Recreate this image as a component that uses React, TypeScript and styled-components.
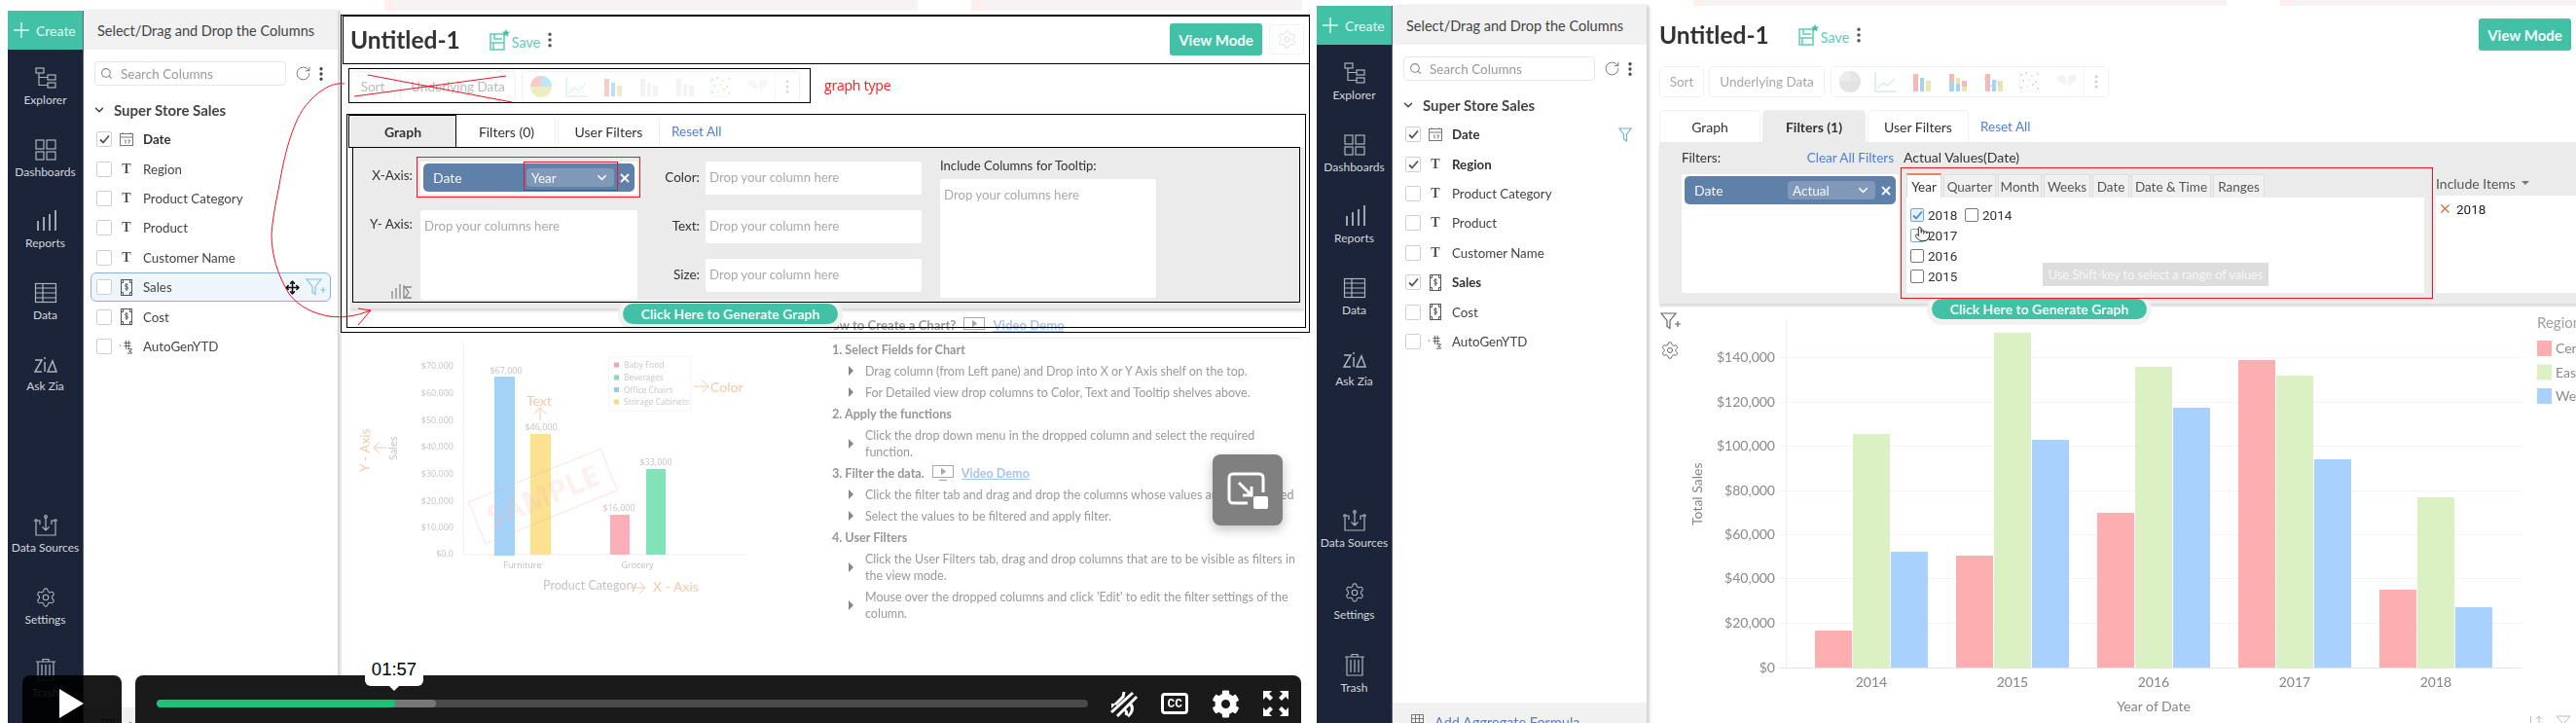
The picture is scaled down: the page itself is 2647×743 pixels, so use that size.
import React from 'react';
import styled, { createGlobalStyle } from 'styled-components';
import { Move, Settings, Pointer, ChevronDown, X, Search, RotateCw, EllipsisVertical } from 'lucide-react';
import { FaCog } from 'react-icons/fa';

const GlobalStyle = createGlobalStyle`
  html, body {
    margin: 0;
    background: #ffffff;
    font-family: Lato, "Open Sans", sans-serif;
  }
`;

const TEAL = '#43c1a6';
const LINK = '#4f7fd6';

/* ---------- small drawings ---------- */

const navStroke = { fill: 'none', stroke: '#aeb4bf', strokeWidth: 1.2 };

const ExplorerIcon = () => (
  <svg width="24" height="22" viewBox="0 0 24 22" {...navStroke}>
    <rect x="2" y="1" width="8" height="5" />
    <rect x="14" y="8" width="8" height="5" />
    <rect x="14" y="16" width="8" height="5" />
    <path d="M5 6v12.500h9M5 10.500h9" />
  </svg>
);
const DashboardIcon = () => (
  <svg width="24" height="22" viewBox="0 0 24 22" {...navStroke}>
    <rect x="2" y="1" width="8" height="9" />
    <rect x="13" y="1" width="9" height="9" />
    <rect x="2" y="13" width="8" height="8" />
    <rect x="13" y="13" width="9" height="8" />
  </svg>
);
const ReportIcon = () => (
  <svg width="24" height="22" viewBox="0 0 24 22" {...navStroke} strokeWidth="1.8">
    <path d="M4 21v-10M10 21v-14M16 21v-17M22 21v-21" />
  </svg>
);
const DataIcon = () => (
  <svg width="24" height="22" viewBox="0 0 24 22" {...navStroke}>
    <rect x="1.500" y="1.500" width="21" height="19" />
    <path d="M1.500 6h21M1.500 11h21M1.500 16h21M9 1.500v19" />
  </svg>
);
const ZiaIcon = () => (
  <svg width="24" height="22" viewBox="0 0 24 22" {...navStroke} strokeWidth="1.5">
    <path d="M1 7h7l-7 12h7M11 9v10M11 4v2M14 19l5-11 4 11z" />
  </svg>
);
const SourceIcon = () => (
  <svg width="24" height="22" viewBox="0 0 24 22" {...navStroke}>
    <path d="M2 8v13h20v-13M12 3v13M8.500 12.500l3.500 3.500 3.500-3.500M3 6h3v4M21 6h-3v4" />
    <circle cx="12" cy="2" r="1.300" />
    <circle cx="2" cy="6" r="1.200" />
    <circle cx="22" cy="6" r="1.200" />
  </svg>
);
const TrashIcon = () => (
  <svg width="24" height="24" viewBox="0 0 24 24" {...navStroke}>
    <path d="M2 4h20M9 4v-2.500h6v2.500M4 4v19h16v-19M8 7v13M12 7v13M16 7v13" />
  </svg>
);
const CollapseIcon = () => (
  <svg width="24" height="22" viewBox="0 0 24 22" {...navStroke}>
    <path d="M8 3h14M2 9h20M8 5l-5 4 5 4" />
  </svg>
);

const CalendarIcon = () => (
  <svg width="16" height="16" viewBox="0 0 16 16" fill="none" stroke="#777" strokeWidth="1">
    <rect x="1.500" y="2.500" width="13" height="12" />
    <path d="M1.500 6h13M4 1v2M12 1v2M6 9h1v3.500M9.500 9h2l-1.500 3.500" />
  </svg>
);
const MoneyIcon = () => (
  <svg width="16" height="19" viewBox="0 0 16 19" fill="none" stroke="#555" strokeWidth="1">
    <rect x="2.500" y="1.500" width="11" height="16" />
    <path d="M2.500 4.500h2v-3M11.500 1.500v3h2M2.500 14.500h2v3M11.500 17.500v-3h2" />
    <path d="M9.500 7c-1-1-3-1-3 .5s3 1 3 2.500-2 1.500-3 .5M8 5v8" />
  </svg>
);
const FormulaIcon = () => (
  <svg width="18" height="18" viewBox="0 0 18 18" fill="none" stroke="#555" strokeWidth="1">
    <path d="M6 5h8M6 8.500h8M8.500 2v10M11.500 2v10M1 8h1.500" />
    <path d="M10 12h5v1l-3 1.500 3 1.500v1h-5" />
  </svg>
);
const FilterPlusIcon = ({ color = '#8ec3de' }: { color?: string }) => (
  <svg width="22" height="18" viewBox="0 0 22 18" fill="none" stroke={color} strokeWidth="1.200">
    <path d="M1 1h15l-6 7.500v8l-3-2v-6zM15 12h6M18 9v6" />
  </svg>
);
const FilterIcon = () => (
  <svg width="14" height="15" viewBox="0 0 14 15" fill="none" stroke="#6fb2dc" strokeWidth="1.200">
    <path d="M1 1h12l-4.500 6v7l-3-2v-5z" />
  </svg>
);
const CheckMark = ({ color = '#555' }: { color?: string }) => (
  <svg width="11" height="10" viewBox="0 0 11 10" fill="none" stroke={color} strokeWidth="1.800">
    <path d="M1 5.500l3 3 6-7" />
  </svg>
);
const SaveIcon = () => (
  <svg width="22" height="22" viewBox="0 0 22 22" fill="none" stroke="#5ecdb5" strokeWidth="1.500">
    <path d="M1 5h14v16h-14zM5 5v5h8M1 14h14M4 14v7" />
    <path d="M17 0l1.200 2.500 2.800.3-2 1.900.5 2.800-2.500-1.400-2.500 1.400.5-2.800-2-1.900 2.800-.3z" fill="#43c1a6" stroke="none" />
  </svg>
);
const ShelfIcon = () => (
  <svg width="22" height="17" viewBox="0 0 22 17" fill="none" stroke="#888" strokeWidth="1.300">
    <path d="M1 16v-8M5 16v-11M9 16v-15M13 16v-14M21 4h-7l4 5.500-4 5.500h7" />
  </svg>
);

const ChartThumb = ({ kind, colors }: { kind: string; colors: string[] }) => {
  const [a, b, c] = colors;
  return (
    <svg width="24" height="24" viewBox="0 0 24 24" fill="none">
      {kind === 'pie' && (
        <>
          <circle cx="12" cy="12" r="11" fill={c} />
          <path d="M12 12L12 1A11 11 0 0 1 23 12z" fill={b} />
          <path d="M12 12L1 12A11 11 0 0 1 12 1z" fill={a} />
        </>
      )}
      {kind === 'line' && <path d="M1 2v20h22M3 19l6-6 4 3 8-7" stroke={b} strokeWidth="1" />}
      {kind === 'bar' && (
        <>
          <rect x="3" y="4" width="5" height="18" fill={a} />
          <rect x="10" y="8" width="4" height="14" fill={b} />
          <rect x="16" y="11" width="5" height="11" fill={c} />
        </>
      )}
      {kind === 'stack' && (
        <>
          <rect x="3" y="4" width="5" height="9" fill={a} />
          <rect x="3" y="13" width="5" height="9" fill={b} />
          <rect x="10" y="8" width="4" height="6" fill={c} />
          <rect x="10" y="14" width="4" height="8" fill={b} />
          <rect x="16" y="11" width="5" height="6" fill={a} />
          <rect x="16" y="17" width="5" height="5" fill={c} />
        </>
      )}
      {kind === 'combo' && (
        <>
          <rect x="3" y="4" width="5" height="18" fill={a} />
          <rect x="10" y="10" width="4" height="12" fill={b} />
          <rect x="16" y="11" width="5" height="11" fill={c} />
          <path d="M2 8l7 9 5-6 7 7" stroke={b} strokeWidth="1" />
        </>
      )}
      {kind === 'scatter' &&
        [[3, 5], [8, 3], [14, 6], [20, 4], [5, 11], [11, 10], [18, 12], [3, 18], [9, 17], [15, 15], [20, 19]].map(([x, y], i) => (
          <circle key={i} cx={x} cy={y} r="0.9" fill={colors[i % 3]} />
        ))}
      {kind === 'scatter' && <path d="M1 1v21h22" stroke="#eeeeee" strokeWidth="1" />}
      {kind === 'map' && <path d="M1 8l6-3 4 2 2 6-3 2-5-3zM14 6l8-2 1 6-5 3-2 5-2-4z" fill="#f1f1f1" />}
    </svg>
  );
};

/* ---------- shell ---------- */

const Page = styled.div`
  position: relative;
  width: 2647px;
  height: 743px;
  overflow: hidden;
  display: flex;
  background: #ffffff;
`;

const Shot = styled.div<{ $width: number; $pad: number }>`
  flex: 0 0 ${(p) => p.$width}px;
  height: 743px;
  overflow: hidden;
  box-sizing: border-box;
  padding-left: ${(p) => p.$pad}px;
  display: flex;
  filter: blur(0.55px);
`;

const Rail = styled.nav<{ $top: number }>`
  flex: 0 0 78px;
  margin-top: ${(p) => p.$top}px;
  background: #1b2438;
  border-right: 1px solid #59627a;
  box-sizing: border-box;
  display: flex;
  flex-direction: column;
`;

const CreateBtn = styled.div`
  height: 40px;
  flex: none;
  background: ${TEAL};
  display: flex;
  align-items: center;
  padding-left: 5px;
  gap: 6px;
  color: #e4f6f2;
  font-size: 14px;
`;

const RailItem = styled.div<{ $gap?: number }>`
  height: 73.5px;
  flex: none;
  box-sizing: border-box;
  padding-top: 18px;
  margin-top: ${(p) => p.$gap ?? 0}px;
  display: flex;
  flex-direction: column;
  align-items: center;
  gap: 4px;
  color: #d3d6dc;
  font-size: 12px;
  line-height: 16px;
  white-space: nowrap;
`;

const ColumnPane = styled.aside<{ $top: number }>`
  flex: 0 0 261px;
  height: 760px;
  margin-top: ${(p) => p.$top}px;
  background: #ffffff;
  box-shadow: 3px 0 3px #d4d4d4;
  position: relative;
  z-index: 1;
  display: flex;
  flex-direction: column;
`;

const PaneHead = styled.div`
  height: 40px;
  flex: none;
  background: #f1f1f1;
  display: flex;
  align-items: center;
  padding-left: 14px;
  font-size: 14.5px;
  color: #444;
`;

const SearchRow = styled.div`
  margin: 12px 0 0 11px;
  display: flex;
  align-items: center;
`;

const SearchBox = styled.div`
  width: 197px;
  height: 25px;
  box-sizing: border-box;
  border: 1px solid #e6e6e6;
  border-radius: 4px;
  display: flex;
  align-items: center;
  padding-left: 5px;
  gap: 8px;
  color: #9a9a9a;
  font-size: 13.5px;
`;

const SearchTools = styled.div`
  display: flex;
  align-items: center;
  margin-left: 9px;
  gap: 1px;
  color: #666;
`;

const TreeHead = styled.div`
  margin: 15px 0 5px 9px;
  height: 20px;
  display: flex;
  align-items: center;
  gap: 8px;
  font-size: 15px;
  font-weight: 700;
  color: #444;
`;

const ColumnRow = styled.div<{ $hover?: boolean }>`
  height: 30.4px;
  margin: 0 7px;
  box-sizing: border-box;
  padding-left: 5px;
  display: flex;
  align-items: center;
  border: 1px solid ${(p) => (p.$hover ? '#84b6d2' : 'transparent')};
  border-radius: 6px;
  background: ${(p) => (p.$hover ? '#eef6fb' : 'transparent')};
`;

const CheckBox = styled.span`
  width: 16px;
  height: 16px;
  flex: none;
  box-sizing: border-box;
  border: 1px solid #cfcfcf;
  border-radius: 2px;
  background: #ffffff;
  display: flex;
  align-items: center;
  justify-content: center;
`;

const TypeCell = styled.span`
  width: 16px;
  margin: 0 9px 0 7px;
  flex: none;
  display: flex;
  align-items: center;
  justify-content: center;
  font: 700 14px "Liberation Serif", serif;
  color: #555;
`;

const ColumnName = styled.span<{ $on?: boolean }>`
  font-size: 13.3px;
  font-weight: ${(p) => (p.$on ? 700 : 400)};
  color: ${(p) => (p.$on ? '#333' : '#444')};
`;

const RowTools = styled.span<{ $pad: number }>`
  margin-left: auto;
  padding-right: ${(p) => p.$pad}px;
  display: flex;
  align-items: center;
  gap: 6px;
`;

const PaneFoot = styled.div`
  margin-top: auto;
  height: 44px;
  flex: none;
  background: #f1f1f1;
  box-sizing: border-box;
  padding: 12px 0 0 19px;
  display: flex;
  gap: 8px;
  color: ${LINK};
  font-size: 14.5px;
`;

const Main = styled.main`
  flex: 1;
  min-width: 0;
  display: flex;
  flex-direction: column;
`;

const TopStrip = styled.div<{ $h: number }>`
  flex: none;
  height: ${(p) => p.$h}px;
  background: linear-gradient(
    90deg,
    #ffffff 48px,
    #fcefee 48px,
    #fcefee 58px,
    #f5f3f3 58px,
    #f5f3f3 596px,
    #ffffff 596px,
    #ffffff 651px,
    #fcefee 651px,
    #fcefee 663px,
    #f5f3f3 663px,
    #f5f3f3 991px,
    #ffffff 991px
  );
`;

const Canvas = styled.div`
  width: 980px;
  flex: none;
  margin-left: 13px;
`;

const TitleRow = styled.div`
  height: 33px;
  margin-top: 13px;
  display: flex;
  align-items: center;
`;

const Title = styled.h1`
  margin: 0;
  font-size: 24.5px;
  font-weight: 700;
  color: #333;
  line-height: 33px;
`;

const SaveLink = styled.div`
  margin-left: 30px;
  display: flex;
  align-items: flex-end;
  gap: 1px;
  color: #5ecdb5;
  font-size: 14.5px;
`;

const HeadDots = styled.span`
  margin-left: -1px;
  display: flex;
  color: #555;
`;

const ViewMode = styled.div`
  margin-left: auto;
  width: 95px;
  height: 33px;
  background: ${TEAL};
  border-radius: 3px;
  color: #f2fbf9;
  font-size: 15px;
  font-weight: 700;
  display: flex;
  align-items: center;
  justify-content: center;
`;

const GearBox = styled.div`
  margin-left: 7px;
  width: 36px;
  height: 31px;
  box-sizing: border-box;
  border: 1px solid #f2f2f2;
  border-radius: 3px;
  display: flex;
  align-items: center;
  justify-content: center;
  color: #d8d8d8;
`;

const ToolRow = styled.div`
  margin-top: 16px;
  height: 32px;
  display: flex;
  gap: 5px;
`;

const ToolBtn = styled.div<{ $width: number; $faded?: boolean }>`
  width: ${(p) => p.$width}px;
  box-sizing: border-box;
  border: 1px solid #f1f1f1;
  border-radius: 4px;
  color: ${(p) => (p.$faded ? '#b9b9b9' : '#a8a8a8')};
  font-size: 13.5px;
  display: flex;
  align-items: center;
  justify-content: center;
`;

const ChartGroup = styled.div<{ $fade: number }>`
  margin-left: 1px;
  width: 286px;
  box-sizing: border-box;
  border: 1px solid #f1f1f1;
  border-radius: 4px;
  display: flex;
  > span {
    opacity: ${(p) => p.$fade};
  }
`;

const ChartCell = styled.span`
  width: 37px;
  flex: none;
  display: flex;
  align-items: center;
  justify-content: center;
`;

const ChartMore = styled.span`
  flex: 1;
  border-left: 1px solid #f1f1f1;
  display: flex;
  align-items: center;
  justify-content: center;
  color: #c4c4c4;
`;

const TabRow = styled.div`
  margin-top: 13px;
  height: 33px;
  display: flex;
  align-items: stretch;
  gap: 2px;
`;

const Tab = styled.div<{ $width: number; $on?: boolean }>`
  width: ${(p) => p.$width}px;
  box-sizing: border-box;
  border: 1px solid ${(p) => (p.$on ? '#ebebeb' : '#f0f0f0')};
  border-bottom: none;
  border-radius: 5px 5px 0 0;
  background: ${(p) => (p.$on ? '#ebebeb' : '#ffffff')};
  color: #333;
  font-size: 14px;
  font-weight: ${(p) => (p.$on ? 700 : 400)};
  display: flex;
  align-items: center;
  justify-content: center;
`;

const ResetLink = styled.div`
  margin-left: 10px;
  align-self: center;
  color: ${LINK};
  font-size: 13.5px;
`;

const FormPanel = styled.section`
  height: 166px;
  background: #ebebeb;
  box-shadow: 0 3px 2px #dddddd;
  display: flex;
`;

const AxisColumn = styled.div`
  width: 295px;
  flex: none;
  padding-top: 15px;
  display: flex;
  flex-direction: column;
  gap: 16px;
`;

const AxisRow = styled.div`
  display: flex;
  gap: 8px;
`;

const AxisLabel = styled.div<{ $height: number }>`
  width: 64px;
  height: ${(p) => p.$height}px;
  flex: none;
  box-sizing: border-box;
  padding-top: 6px;
  text-align: right;
  font-size: 13.5px;
  color: #333;
  display: flex;
  flex-direction: column;
  justify-content: space-between;
  align-items: flex-end;
  white-space: nowrap;
`;

const DropBox = styled.div<{ $height: number; $width?: number }>`
  width: ${(p) => p.$width ?? 223}px;
  height: ${(p) => p.$height}px;
  box-sizing: border-box;
  background: #ffffff;
  border-radius: 2px;
  padding: 2px 3px;
  color: #a9a9a9;
  font-size: 13.2px;
  line-height: 28px;
  white-space: nowrap;
`;

const PlaceHolder = styled.span`
  padding-left: 1px;
`;

const ShelfColumn = styled.div`
  margin-left: 23px;
  width: 269px;
  flex: none;
  padding-top: 15px;
  display: flex;
  flex-direction: column;
  gap: 16px;
`;

const ShelfRow = styled.div`
  display: flex;
  gap: 6px;
`;

const ShelfLabel = styled.div`
  width: 41px;
  flex: none;
  line-height: 32px;
  text-align: right;
  font-size: 13.5px;
  color: #333;
`;

const TipColumn = styled.div`
  margin-left: 19px;
  padding-top: 12px;
`;

const TipLabel = styled.div`
  font-size: 13.1px;
  line-height: 14px;
  margin-bottom: 7px;
  color: #333;
`;

const Pill = styled.div`
  height: 29px;
  border-radius: 5px;
  background: #5f80a9;
  color: #f6f8fb;
  display: flex;
  align-items: center;
  padding-left: 10px;
  font-size: 14px;
`;

const PillSelect = styled.div`
  margin-left: auto;
  width: 90px;
  height: 19px;
  box-sizing: border-box;
  padding: 0 5px;
  border-radius: 4px;
  background: #8199b9;
  display: flex;
  align-items: center;
  justify-content: space-between;
  font-size: 13.5px;
`;

const PillClose = styled.span`
  width: 21px;
  display: flex;
  align-items: center;
  justify-content: center;
`;

/* filters tab */

const FilterColumn = styled.div`
  width: 223px;
  flex: none;
  margin-left: 23px;
  padding-top: 8px;
`;

const FilterHead = styled.div`
  height: 16px;
  margin-bottom: 9px;
  display: flex;
  justify-content: space-between;
  padding-right: 5px;
  align-items: center;
  font-size: 13.5px;
  color: #333;
`;

const ClearLink = styled.span`
  color: ${LINK};
  font-size: 13.5px;
`;

const ValueColumn = styled.div`
  width: 535px;
  flex: none;
  margin-left: 5px;
  padding-top: 8px;
`;

const ValueHead = styled.div`
  height: 16px;
  line-height: 16px;
  font-size: 14px;
  color: #333;
  white-space: nowrap;
`;

const DateTabs = styled.div`
  margin: 8px 0 0 3px;
  height: 25px;
  display: flex;
  gap: 2px;
`;

const DateTab = styled.div<{ $width: number; $on?: boolean }>`
  width: ${(p) => p.$width}px;
  box-sizing: border-box;
  border: 1px solid #dedede;
  border-top: ${(p) => (p.$on ? '2px solid #e8835a' : '1px solid #dedede')};
  border-bottom: none;
  margin-top: ${(p) => (p.$on ? 0 : 1)}px;
  background: ${(p) => (p.$on ? '#ffffff' : '#f0f0f0')};
  color: ${(p) => (p.$on ? '#333' : '#555')};
  font-size: 13.5px;
  display: flex;
  align-items: center;
  justify-content: center;
  white-space: nowrap;
`;

const DatePanel = styled.div`
  position: relative;
  margin-left: 3px;
  height: 98px;
  width: 532px;
  box-sizing: border-box;
  padding: 7px 0 0 4px;
  background: #ffffff;
  display: grid;
  grid-template-rows: repeat(4, 21px);
  grid-auto-flow: column;
  grid-auto-columns: 56px;
`;

const YearItem = styled.label`
  position: relative;
  display: flex;
  align-items: center;
  gap: 4px;
  font: 13.5px Roboto, sans-serif;
  color: #333;
`;

const YearBox = styled.span<{ $on?: boolean; $hot?: boolean }>`
  width: 14px;
  height: 14px;
  box-sizing: border-box;
  border: 1px solid ${(p) => (p.$on || p.$hot ? '#6fa8dc' : '#777')};
  border-radius: 2px;
  background: ${(p) => (p.$on ? '#e6f1fb' : '#fff')};
  display: flex;
  align-items: center;
  justify-content: center;
`;

const HandCursor = styled.span`
  position: absolute;
  left: 4px;
  top: 1px;
  display: flex;
  color: #222;
`;

const ShiftHint = styled.div`
  position: absolute;
  left: 140px;
  top: 67px;
  width: 232px;
  height: 24px;
  background: #dddddd;
  color: #f6f6f6;
  font-size: 12.7px;
  line-height: 24px;
  text-align: center;
  white-space: nowrap;
`;

const IncludeColumn = styled.div`
  margin-left: 12px;
  padding-top: 34px;
  flex: 1;
`;

const IncludeHead = styled.div`
  height: 16px;
  margin-bottom: 5px;
  display: flex;
  align-items: center;
  gap: 6px;
  font-size: 14px;
  color: #555;
`;

const Caret = styled.span`
  width: 0;
  height: 0;
  border: 4px solid transparent;
  border-top: 4px solid #777;
  margin-top: 4px;
`;

const IncludeList = styled.div`
  height: 100px;
  background: #ffffff;
  box-sizing: border-box;
  padding: 6px 0 0 2px;
  display: flex;
  gap: 4px;
  align-items: flex-start;
  font: 13.5px Roboto, sans-serif;
  color: #222;
`;

/* generate button and lower part */

const ActionRow = styled.div<{ $bottom: number }>`
  position: relative;
  z-index: 2;
  margin: -5px 0 ${(p) => p.$bottom}px 280px;
  display: flex;
  align-items: flex-start;
`;

const Generate = styled.div`
  position: relative;
  z-index: 2;
  width: 221px;
  height: 21px;
  flex: none;
  border-radius: 11px;
  background: ${TEAL};
  box-shadow: 0 1px 0 5px #f1f1f1;
  color: #f5fcfa;
  font-size: 14px;
  font-weight: 700;
  line-height: 21px;
  text-align: center;
`;

const HowTo = styled.div`
  margin: 14px 0 0 -16px;
  height: 16px;
  display: flex;
  align-items: center;
  gap: 8px;
  color: #9b9b9b;
  font-size: 13.2px;
  font-weight: 700;
  white-space: nowrap;
`;

const DemoLink = styled.span`
  color: #a9c4ec;
  text-decoration: underline;
  font-weight: 700;
`;

const ScreenIcon = () => (
  <svg width="22" height="16" viewBox="0 0 22 16" fill="none" stroke="#a8a8a8" strokeWidth="1">
    <rect x="0.500" y="0.500" width="21" height="12" />
    <path d="M7 15.500h8" strokeWidth="1.500" />
    <path d="M9.500 3.500l4 3-4 3z" fill="#a8a8a8" />
  </svg>
);

const Lower = styled.div`
  display: flex;
  width: 980px;
`;

const HelpColumn = styled.div`
  width: 485px;
  flex: none;
  border-top: 1px solid #eeeeee;
  box-sizing: border-box;
  color: #9a9a9a;
`;

const HelpHead = styled.div`
  display: flex;
  align-items: center;
  gap: 8px;
  height: 22px;
  padding-left: 2px;
  font-size: 12.6px;
  font-weight: 700;
  color: #969696;
  white-space: nowrap;
`;

const HelpItem = styled.div`
  display: flex;
  align-items: center;
  padding: 2.5px 0 2.5px 19px;
  font-size: 12.5px;
  line-height: 17px;
  white-space: nowrap;
`;

const HelpArrow = styled.span`
  width: 0;
  height: 0;
  flex: none;
  margin-right: 12px;
  border: 5px solid transparent;
  border-left: 5px solid #888;
  border-right: none;
`;

const ChartRow = styled.div`
  display: flex;
  width: 980px;
`;

const ChartTools = styled.div`
  width: 30px;
  flex: none;
  padding: 5px 0 0 1px;
  box-sizing: border-box;
  display: flex;
  flex-direction: column;
  gap: 11px;
  color: #666;
`;

const ChartSvg = styled.svg`
  flex: none;
`;

/* video player on top of the first screenshot */

const PlayBtn = styled.div`
  position: absolute;
  left: 23px;
  top: 694px;
  width: 102px;
  height: 60px;
  border-radius: 8px;
  background: rgba(0, 0, 0, 0.9);
  z-index: 5;
`;

const PlayTriangle = styled.span`
  position: absolute;
  left: 38px;
  top: 14px;
  width: 0;
  height: 0;
  border-style: solid;
  border-width: 15px 0 15px 25px;
  border-color: transparent transparent transparent #ffffff;
`;

const VideoBar = styled.div`
  position: absolute;
  left: 139px;
  top: 694px;
  width: 1198px;
  height: 60px;
  border-radius: 8px;
  background: #1a1a1a;
  z-index: 5;
  box-sizing: border-box;
  padding: 6px 12px 0 22px;
  display: flex;
  align-items: flex-start;
`;

const Track = styled.div`
  position: relative;
  flex: none;
  margin-top: 19px;
  width: 957px;
  height: 8px;
  border-radius: 4px;
  background: #4a4a4a;
  overflow: hidden;
`;

const TrackFill = styled.div<{ $color: string; $width: number }>`
  position: absolute;
  left: 0;
  top: 0;
  bottom: 0;
  width: ${(p) => p.$width}px;
  border-radius: 4px;
  background: ${(p) => p.$color};
`;

const VideoTools = styled.div`
  display: flex;
  flex: 1;
  justify-content: space-between;
  align-items: center;
  margin-left: 22px;
  height: 46px;
  color: #ffffff;
`;

const CcBadge = styled.span`
  width: 28px;
  height: 22px;
  box-sizing: border-box;
  border: 3px solid #ffffff;
  border-radius: 4px;
  font: 700 13px "Liberation Mono", monospace;
  display: flex;
  align-items: center;
  justify-content: center;
`;

const TimeTip = styled.div`
  position: absolute;
  left: 375px;
  top: 672px;
  width: 60px;
  height: 33px;
  border-radius: 0 0 6px 6px;
  background: #ffffff;
  z-index: 6;
  font: 18.5px "Liberation Sans", sans-serif;
  color: #000000;
  text-align: center;
  line-height: 31px;
  &::after {
    content: '';
    position: absolute;
    left: 25px;
    bottom: -5px;
    border: 5px solid transparent;
    border-top: 5px solid #ffffff;
    border-bottom: none;
  }
`;

const PipOverlay = styled.div`
  position: absolute;
  left: 1246px;
  top: 467px;
  width: 72px;
  height: 73px;
  border-radius: 8px;
  background: #808080;
  box-shadow: 0 4px 12px rgba(0, 0, 0, 0.25);
  z-index: 5;
  display: flex;
  align-items: center;
  justify-content: center;
`;

const Marks = styled.svg`
  position: absolute;
  left: 0;
  top: 0;
  z-index: 4;
  pointer-events: none;
`;

const GraphTypeNote = styled.span`
  position: absolute;
  left: 847px;
  top: 78px;
  z-index: 4;
  color: #ff1a1a;
  font: 14px "Open Sans", sans-serif;
  letter-spacing: -0.2px;
`;

/* ---------- pieces with data ---------- */

const topNav = [
  { label: 'Explorer', icon: <ExplorerIcon /> },
  { label: 'Dashboards', icon: <DashboardIcon /> },
  { label: 'Reports', icon: <ReportIcon /> },
  { label: 'Data', icon: <DataIcon /> },
  { label: 'Ask Zia', icon: <ZiaIcon /> },
];

const NavRail = ({ top }: { top: number }) => (
  <Rail $top={top}>
    <CreateBtn>
      <svg width="18" height="18" viewBox="0 0 18 18" stroke="#e4f6f2" strokeWidth="1.400">
        <path d="M9 1v16M1 9h16" />
      </svg>
      Create
    </CreateBtn>
    {topNav.map((n) => (
      <RailItem key={n.label}>
        {n.icon}
        {n.label}
      </RailItem>
    ))}
    <RailItem $gap={92.5}>
      <SourceIcon />
      Data Sources
    </RailItem>
    <RailItem>
      <Settings size={22} strokeWidth={1.2} color="#aeb4bf" />
      Settings
    </RailItem>
    <RailItem>
      <TrashIcon />
      Trash
    </RailItem>
    <RailItem>
      <CollapseIcon />
    </RailItem>
  </Rail>
);

type Col = { name: string; type: 'date' | 'text' | 'num' | 'calc' };

const columns: Col[] = [
  { name: 'Date', type: 'date' },
  { name: 'Region', type: 'text' },
  { name: 'Product Category', type: 'text' },
  { name: 'Product', type: 'text' },
  { name: 'Customer Name', type: 'text' },
  { name: 'Sales', type: 'num' },
  { name: 'Cost', type: 'num' },
  { name: 'AutoGenYTD', type: 'calc' },
];

const TypeIcon = ({ type }: { type: Col['type'] }) => {
  if (type === 'date') return <CalendarIcon />;
  if (type === 'num') return <MoneyIcon />;
  if (type === 'calc') return <FormulaIcon />;
  return <>T</>;
};

const Columns = ({ top, checked, hover, filtered }: { top: number; checked: string[]; hover?: string; filtered?: string }) => (
  <ColumnPane $top={top}>
    <PaneHead>Select/Drag and Drop the Columns</PaneHead>
    <SearchRow>
      <SearchBox>
        <Search size={13} color="#888" />
        Search Columns
      </SearchBox>
      <SearchTools>
        <RotateCw size={17} strokeWidth={1.2} />
        <EllipsisVertical size={18} strokeWidth={2.4} color="#444" />
      </SearchTools>
    </SearchRow>
    <TreeHead>
      <ChevronDown size={14} strokeWidth={2.6} color="#444" />
      Super Store Sales
    </TreeHead>
    {columns.map((c) => (
      <ColumnRow key={c.name} $hover={c.name === hover}>
        <CheckBox>{checked.includes(c.name) && <CheckMark />}</CheckBox>
        <TypeCell>
          <TypeIcon type={c.type} />
        </TypeCell>
        <ColumnName $on={checked.includes(c.name)}>{c.name}</ColumnName>
        {c.name === hover && (
          <RowTools $pad={3}>
            <Move size={15} strokeWidth={2.6} color="#111" />
            <FilterPlusIcon />
          </RowTools>
        )}
        {c.name === filtered && (
          <RowTools $pad={7}>
            <FilterIcon />
          </RowTools>
        )}
      </ColumnRow>
    ))}
    <PaneFoot>
      <svg width="16" height="14" viewBox="0 0 16 14" fill="none" stroke="#777">
        <path d="M.5.500h12v12h-12zM.5 4.500h12M.5 8.500h12M4.500.500v12M8.500.500v12" />
      </svg>
      Add Aggregate Formula
    </PaneFoot>
  </ColumnPane>
);

const Header = () => (
  <TitleRow>
    <Title>Untitled-1</Title>
    <SaveLink>
      <SaveIcon />
      Save
    </SaveLink>
    <HeadDots>
      <EllipsisVertical size={20} strokeWidth={2.2} />
    </HeadDots>
    <ViewMode>View Mode</ViewMode>
    <GearBox>
      <Settings size={21} strokeWidth={1} />
    </GearBox>
  </TitleRow>
);

const Toolbar = ({ live }: { live?: boolean }) => {
  const gray = ['#ececec', '#ececec', '#ececec'];
  const full = ['#f5a8a6', '#8fc9ef', '#e3e29a'];
  const line = ['#fff', '#a9dcd6', '#fff'];
  return (
    <ToolRow>
      <ToolBtn $width={46} $faded={!live}>
        Sort
      </ToolBtn>
      <ToolBtn $width={119} $faded={!live}>
        Underlying Data
      </ToolBtn>
      <ChartGroup $fade={live ? 0.8 : 0.6}>
        <ChartCell>
          <ChartThumb kind="pie" colors={live ? ['#e6e6e6', '#e0e0e0', '#dcdcdc'] : ['#f3a9a0', '#8fd7ee', '#e3e29a']} />
        </ChartCell>
        <ChartCell>
          <ChartThumb kind="line" colors={line} />
        </ChartCell>
        <ChartCell>
          <ChartThumb kind="bar" colors={full} />
        </ChartCell>
        <ChartCell>
          <ChartThumb kind="stack" colors={live ? full : gray} />
        </ChartCell>
        <ChartCell>
          <ChartThumb kind="combo" colors={live ? full : gray} />
        </ChartCell>
        <ChartCell>
          <ChartThumb kind="scatter" colors={full} />
        </ChartCell>
        <ChartCell>
          <ChartThumb kind="map" colors={gray} />
        </ChartCell>
        <ChartMore>
          <EllipsisVertical size={18} strokeWidth={2} />
        </ChartMore>
      </ChartGroup>
    </ToolRow>
  );
};

const FieldPill = ({ name, agg }: { name: string; agg: string }) => (
  <Pill>
    {name}
    <PillSelect>
      {agg}
      <ChevronDown size={15} strokeWidth={2.4} />
    </PillSelect>
    <PillClose>
      <X size={14} strokeWidth={3.2} />
    </PillClose>
  </Pill>
);

const GraphForm = () => (
  <FormPanel>
    <AxisColumn>
      <AxisRow>
        <AxisLabel $height={34}>X-Axis:</AxisLabel>
        <DropBox $height={34}>
          <FieldPill name="Date" agg="Year" />
        </DropBox>
      </AxisRow>
      <AxisRow>
        <AxisLabel $height={92}>
          Y- Axis:
          <ShelfIcon />
        </AxisLabel>
        <DropBox $height={92}>
          <PlaceHolder>Drop your columns here</PlaceHolder>
        </DropBox>
      </AxisRow>
    </AxisColumn>
    <ShelfColumn>
      {['Color:', 'Text:', 'Size:'].map((s) => (
        <ShelfRow key={s}>
          <ShelfLabel>{s}</ShelfLabel>
          <DropBox $height={34} $width={222}>
            <PlaceHolder>Drop your column here</PlaceHolder>
          </DropBox>
        </ShelfRow>
      ))}
    </ShelfColumn>
    <TipColumn>
      <TipLabel>Include Columns for Tooltip:</TipLabel>
      <DropBox $height={122} $width={222}>
        <PlaceHolder>Drop your columns here</PlaceHolder>
      </DropBox>
    </TipColumn>
  </FormPanel>
);

const dateTabs = [
  { label: 'Year', w: 36, on: true },
  { label: 'Quarter', w: 54 },
  { label: 'Month', w: 45 },
  { label: 'Weeks', w: 48 },
  { label: 'Date', w: 38 },
  { label: 'Date & Time', w: 82 },
  { label: 'Ranges', w: 53 },
];

const FiltersForm = () => (
  <FormPanel>
    <FilterColumn>
      <FilterHead>
        Filters:
        <ClearLink>Clear All Filters</ClearLink>
      </FilterHead>
      <DropBox $height={122}>
        <FieldPill name="Date" agg="Actual" />
      </DropBox>
    </FilterColumn>
    <ValueColumn>
      <ValueHead>Actual Values(Date)</ValueHead>
      <DateTabs>
        {dateTabs.map((t) => (
          <DateTab key={t.label} $width={t.w} $on={t.on}>
            {t.label}
          </DateTab>
        ))}
      </DateTabs>
      <DatePanel>
        {['2018', '2017', '2016', '2015', '2014'].map((y) => (
          <YearItem key={y}>
            <YearBox $on={y === '2018'} $hot={y === '2017'}>
              {y === '2018' && <CheckMark color="#3f8edc" />}
            </YearBox>
            {y}
            {y === '2017' && (
              <HandCursor>
                <Pointer size={17} strokeWidth={1.4} fill="#ffffff" />
              </HandCursor>
            )}
          </YearItem>
        ))}
        <ShiftHint>Use Shift-key to select a range of values</ShiftHint>
      </DatePanel>
    </ValueColumn>
    <IncludeColumn>
      <IncludeHead>
        Include Items
        <Caret />
      </IncludeHead>
      <IncludeList>
        <X size={15} strokeWidth={1.8} color="#d9623b" />
        2018
      </IncludeList>
    </IncludeColumn>
  </FormPanel>
);

/* the faded sample chart: drawn in page coordinates, shifted to the origin of its svg */
const SampleChart = () => {
  const ticks = [
    ['$70,000', 375],
    ['$60,000', 403],
    ['$50,000', 431],
    ['$40,000', 458],
    ['$30,000', 486],
    ['$20,000', 514],
    ['$10,000', 541],
    ['$0.0', 568],
  ] as const;
  const orange = '#f6c9ad';
  return (
    <ChartSvg width="493" height="340" fontFamily="Open Sans, sans-serif">
      <g transform="translate(-360 -347)">
        <path d="M476.500 353v217h292" stroke="#f0f0f0" fill="none" />
        {ticks.map(([t, y]) => (
          <text key={t} x="466" y={y + 3.500} fontSize="9" fill="#c4c4c4" textAnchor="end">
            {t}
          </text>
        ))}
        <rect x="508" y="387" width="21" height="184" fill="#a3d2f8" />
        <rect x="545" y="446" width="21" height="124" fill="#fbe190" />
        <rect x="627" y="529" width="20" height="41" fill="#fcafb6" />
        <rect x="664" y="482" width="20" height="88" fill="#80e3ba" />
        <text x="520" y="384" fontSize="9" fill="#c4c4c4" textAnchor="middle">$67,000</text>
        <text x="556" y="442" fontSize="9" fill="#c4c4c4" textAnchor="middle">$46,000</text>
        <text x="636" y="525" fontSize="9" fill="#c4c4c4" textAnchor="middle">$16,000</text>
        <text x="674" y="478" fontSize="9" fill="#c4c4c4" textAnchor="middle">$33,000</text>
        <text x="537" y="584" fontSize="9" fill="#bdbdbd" textAnchor="middle">Furniture</text>
        <text x="655" y="584" fontSize="9" fill="#bdbdbd" textAnchor="middle">Grocery</text>
        <g transform="rotate(-22 558 510)" opacity="0.22">
          <rect x="485" y="487" width="146" height="46" fill="none" stroke="#f5a5a5" strokeWidth="1.500" />
          <text x="558" y="521" fontSize="31" fontWeight="700" fill="#f6b9b9" textAnchor="middle">SAMPLE</text>
        </g>
        <rect x="625.500" y="366.500" width="84" height="56" fill="none" stroke="#f6f6f6" />
        {[
          ['Baby Food', 375, '#f2a6ac'],
          ['Beverages', 388, '#8fd6b6'],
          ['Office Chairs', 400.500, '#9bcae6'],
          ['Storage Cabinets', 413, '#f7d98a'],
        ].map(([t, y, c]) => (
          <g key={t as string}>
            <rect x="631" y={(y as number) - 2.500} width="5" height="5" fill={c as string} />
            <text x="641" y={(y as number) + 3} fontSize="8.500" fill="#c8c8c8">{t}</text>
          </g>
        ))}
        <text x="730" y="403" fontSize="14" fill={orange} fontFamily="Lato, sans-serif">Color</text>
        <path d="M713 397h14M722 391l6 6-6 6" stroke={orange} fill="none" />
        <text x="541" y="417" fontSize="14" fill={orange} fontFamily="Lato, sans-serif">Text</text>
        <path d="M555 432v-13M549 425l6-6 6 6" stroke={orange} fill="none" />
        <text x="558" y="606" fontSize="12.500" fill="#c4c4c4" fontFamily="Lato, sans-serif">Product Category</text>
        <path d="M648 604h14M657 598l6 6-6 6" stroke={orange} fill="none" />
        <text x="671" y="608" fontSize="14" fill={orange} fontFamily="Lato, sans-serif">X - Axis</text>
        <text transform="translate(380 485) rotate(-90)" fontSize="13.500" fill={orange} fontFamily="Lato, sans-serif">Y - Axis</text>
        <path d="M397 460h-13M390 454l-6 6 6 6" stroke={orange} fill="none" />
        <text transform="translate(408 473) rotate(-90)" fontSize="11" fill="#c4c4c4" fontFamily="Lato, sans-serif">Sales</text>
      </g>
    </ChartSvg>
  );
};

const salesBars = [
  { x: 1865, tops: [648, 446, 567], year: '2014' },
  { x: 2010, tops: [571, 342, 452], year: '2015' },
  { x: 2155, tops: [527, 377, 419], year: '2016' },
  { x: 2300, tops: [370, 386, 472], year: '2017' },
  { x: 2445, tops: [606, 511, 624], year: '2018' },
];
const salesColors = ['#fcaeb1', '#dbf0c3', '#a9d1fd'];
const salesTicks = [
  ['$140,000', 367],
  ['$120,000', 413],
  ['$100,000', 458],
  ['$80,000', 504],
  ['$60,000', 549],
  ['$40,000', 594],
  ['$20,000', 640],
  ['$0', 686],
] as const;

const SalesChart = () => (
  <ChartSvg width="950" height="427" fontFamily="Lato, sans-serif">
    <g transform="translate(-1735 -316)">
      {salesTicks.map(([t, y]) => (
        <g key={t}>
          <path d={`M1828 ${y + 0.5}h763`} stroke={y === 686 ? '#e6e6e6' : '#f4f4f4'} />
          <text x="1824" y={y + 5} fontSize="14" fill="#8a8a8a" textAnchor="end">{t}</text>
        </g>
      ))}
      <path d="M1835.500 328v358" stroke="#f0f0f0" />
      {salesBars.map((g) => (
        <g key={g.year}>
          {g.tops.map((top, i) => (
            <rect key={i} x={g.x + i * 39} y={top} width="38" height={686 - top} fill={salesColors[i]} />
          ))}
          <text x={g.x + 58} y="706" fontSize="14" fill="#858585" textAnchor="middle">{g.year}</text>
        </g>
      ))}
      <text x="2213" y="731" fontSize="14" fill="#858585" textAnchor="middle">Year of Date</text>
      <text transform="translate(1749 540) rotate(-90)" fontSize="14" fill="#858585">Total Sales</text>
      <text x="2607" y="337" fontSize="15" fill="#a0a0a0">Region</text>
      {['Central', 'East', 'West'].map((r, i) => (
        <g key={r}>
          <rect x="2607" y={350 + i * 24.500} width="15" height="16" fill={salesColors[i]} />
          <text x="2626" y={363 + i * 24.500} fontSize="14" fill="#8a8a8a">{r}</text>
        </g>
      ))}
      <path d="M2600.500 736v7M2609 743v-7M2606 739l3-3 3 3M2627 736h14l-7 8z" stroke="#bbbbbb" fill="none" />
    </g>
  </ChartSvg>
);

const helpLines = [
  { head: '1. Select Fields for Chart' },
  { item: ['Drag column (from Left pane) and Drop into X or Y Axis shelf on the top.'] },
  { item: ['For Detailed view drop columns to Color, Text and Tooltip shelves above.'] },
  { head: '2. Apply the functions' },
  { item: ['Click the drop down menu in the dropped column and select the required', 'function.'] },
  { head: '3. Filter the data.', demo: true },
  { item: ['Click the filter tab and drag and drop the columns whose values are to be filtered'] },
  { item: ['Select the values to be filtered and apply filter.'] },
  { head: '4. User Filters' },
  { item: ['Click the User Filters tab, drag and drop columns that are to be visible as filters in', 'the view mode.'] },
  { item: ["Mouse over the dropped columns and click 'Edit' to edit the filter settings of the", 'column.'] },
];

const HelpText = () => (
  <HelpColumn>
    {helpLines.map((l, i) =>
      l.head ? (
        <HelpHead key={i}>
          {l.head}
          {l.demo && (
            <>
              <ScreenIcon />
              <DemoLink>Video Demo</DemoLink>
            </>
          )}
        </HelpHead>
      ) : (
        <HelpItem key={i}>
          <HelpArrow />
          <span>
            {l.item?.map((t, j) => (
              <React.Fragment key={j}>
                {j > 0 && <br />}
                {t}
              </React.Fragment>
            ))}
          </span>
        </HelpItem>
      ),
    )}
  </HelpColumn>
);

const VideoPlayer = () => (
  <>
    <PipOverlay>
      <svg width="44" height="40" viewBox="0 0 44 40" fill="none" stroke="#ffffff" strokeWidth="3">
        <path d="M22 33H7a4 4 0 0 1-4-4V7a4 4 0 0 1 4-4h27a4 4 0 0 1 4 4v15" />
        <path d="M13 12l13 13M26 16v9h-9" />
        <rect x="28" y="26" width="15" height="13" rx="2" fill="#ffffff" stroke="none" />
      </svg>
    </PipOverlay>
    <PlayBtn>
      <PlayTriangle />
    </PlayBtn>
    <TimeTip>01:57</TimeTip>
    <VideoBar>
      <Track>
        <TrackFill $color="#777777" $width={287} />
        <TrackFill $color="#1ac477" $width={245} />
      </Track>
      <VideoTools>
        <svg width="30" height="30" viewBox="0 0 30 30" fill="none" stroke="#ffffff" strokeWidth="3">
          <path d="M2 24L24 4M8 28L28 8M6 16l8-8 1-5M22 16c3 4 1 9-3 12M16 22c2 1 2 3 1 5" />
          <path d="M2 15h5l7-7-12 12z" fill="#ffffff" stroke="none" />
        </svg>
        <CcBadge>CC</CcBadge>
        <FaCog size={29} />
        <svg width="28" height="28" viewBox="0 0 28 28" fill="#ffffff">
          <path d="M1 1h9l-3 3 4 4-3 3-4-4-3 3zM27 1v9l-3-3-4 4-3-3 4-4-3-3zM1 27v-9l3 3 4-4 3 3-4 4 3 3zM27 27h-9l3-3-4-4 3-3 4 4 3-3z" />
        </svg>
      </VideoTools>
    </VideoBar>
  </>
);

/* the red and black marks somebody drew on the screenshots */
const Annotations = () => (
  <>
    <Marks width="2647" height="743" fill="none">
      <g stroke="#000000" strokeWidth="1">
        <rect x="350.500" y="15.500" width="995" height="326" />
        <rect x="352.500" y="16.500" width="993" height="49" />
        <rect x="358.500" y="70.500" width="474" height="35" />
        <rect x="356.500" y="117.500" width="985" height="219" />
        <rect x="358.500" y="118.500" width="110" height="33" />
        <rect x="362.500" y="151.500" width="973" height="159" />
      </g>
      <g stroke="#f01320" strokeWidth="1">
        <rect x="428.500" y="161.500" width="229" height="41" />
        <rect x="538.500" y="166.500" width="96" height="29" />
        <rect x="1953.500" y="172.500" width="546" height="134" />
        <path d="M354 86C340 84 325 95 313 110C300 128 292 160 287 190C284 205 280 225 279 240C279 262 285 282 297 302C308 316 322 322 338 325C352 327 365 325 381 319" />
        <path d="M368 317l13 2-13 15M378 77l148 28M364 99l156-21" />
      </g>
    </Marks>
    <GraphTypeNote>graph type</GraphTypeNote>
  </>
);

export default function App() {
  return (
    <Page>
      <GlobalStyle />
      <Shot $width={1353} $pad={8}>
        <NavRail top={11} />
        <Columns top={11} checked={['Date']} hover="Sales" />
        <Main>
          <TopStrip $h={11} />
          <Canvas>
            <Header />
            <Toolbar />
            <TabRow>
              <Tab $width={108} $on>
                Graph
              </Tab>
              <Tab $width={101}>Filters (0)</Tab>
              <Tab $width={105}>User Filters</Tab>
              <ResetLink>Reset All</ResetLink>
            </TabRow>
            <GraphForm />
            <ActionRow $bottom={5}>
              <Generate>Click Here to Generate Graph</Generate>
              <HowTo>
                How to Create a Chart?
                <ScreenIcon />
                <DemoLink>Video Demo</DemoLink>
              </HowTo>
            </ActionRow>
            <Lower>
              <SampleChart />
              <HelpText />
            </Lower>
          </Canvas>
        </Main>
      </Shot>
      <Shot $width={1294} $pad={0}>
        <NavRail top={6} />
        <Columns top={6} checked={['Date', 'Region', 'Sales']} filtered="Date" />
        <Main>
          <TopStrip $h={6} />
          <Canvas>
            <Header />
            <Toolbar live />
            <TabRow>
              <Tab $width={104}>Graph</Tab>
              <Tab $width={106} $on>
                Filters (1)
              </Tab>
              <Tab $width={104}>User Filters</Tab>
              <ResetLink>Reset All</ResetLink>
            </TabRow>
            <FiltersForm />
            <ActionRow $bottom={-12}>
              <Generate>Click Here to Generate Graph</Generate>
            </ActionRow>
            <ChartRow>
              <ChartTools>
                <FilterPlusIcon color="#666" />
                <Settings size={20} strokeWidth={1.2} />
              </ChartTools>
              <SalesChart />
            </ChartRow>
          </Canvas>
        </Main>
      </Shot>
      <VideoPlayer />
      <Annotations />
    </Page>
  );
}
